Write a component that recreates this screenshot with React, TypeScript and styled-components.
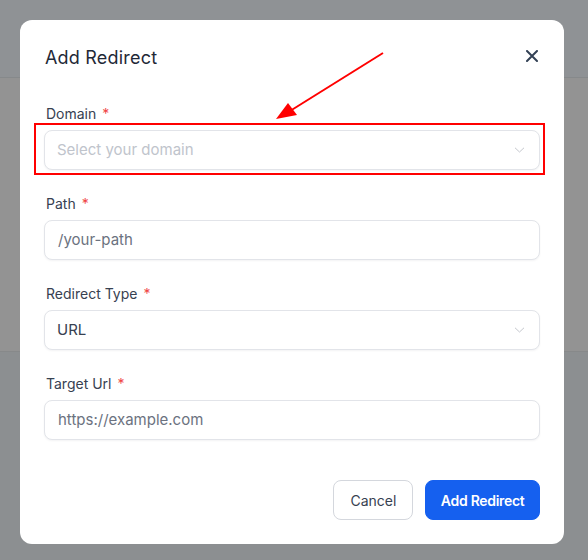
import React from 'react';
import styled, { createGlobalStyle } from 'styled-components';

const GlobalStyle = createGlobalStyle`
  * { box-sizing: border-box; }
  html, body {
    margin: 0;
    padding: 0;
    height: 100%;
  }
  body {
    font-family: Inter, "Noto Sans", "Liberation Sans", sans-serif;
    background: #8c8f91;
  }
`;

const Page = styled.div`
  position: relative;
  width: 588px;
  height: 560px;
  overflow: hidden;
  display: flex;
  flex-direction: column;
`;

const PageHeader = styled.div`
  height: 78px;
  background: #8f9295;
  border-bottom: 1px solid #86898b;
`;

const PagePanel = styled.div`
  height: 274px;
  background: #939393;
  border-bottom: 1px solid #87898a;
`;

const PageRest = styled.div`
  flex: 1;
  background: #8c8f91;
`;

const Backdrop = styled.div`
  position: absolute;
  inset: 0;
  padding: 20px 24px 16px 20px;
`;

const Modal = styled.div`
  position: relative;
  width: 544px;
  height: 524px;
  background: #ffffff;
  border-radius: 12px;
  padding: 24px;
  display: flex;
  flex-direction: column;
`;

const Header = styled.div`
  display: flex;
  align-items: center;
  justify-content: space-between;
  height: 26px;
  margin-bottom: 34px;
`;

const Title = styled.h2`
  margin: 2px 0 0 1px;
  font-size: 18px;
  line-height: 26px;
  font-weight: 400;
  letter-spacing: 0.2px;
  color: #1f2937;
`;

const CloseButton = styled.button`
  border: 0;
  background: transparent;
  padding: 0;
  width: 20px;
  height: 20px;
  display: flex;
  align-items: center;
  justify-content: center;
  margin-right: -2px;
  margin-top: -2px;
  color: #334155;
  cursor: pointer;
`;

const Form = styled.div`
  display: flex;
  flex-direction: column;
  gap: 24px;
`;

const Field = styled.div`
  position: relative;
  display: flex;
  flex-direction: column;
  gap: 6px;
`;

const Label = styled.label`
  font-size: 14px;
  line-height: 20px;
  color: #374151;
  padding-left: 2px;
`;

const Required = styled.span`
  color: #ef4444;
  margin-left: 6px;
`;

const Control = styled.div`
  height: 40px;
  border: 1px solid #e2e4e9;
  border-radius: 8px;
  background: #fff;
  box-shadow: 0 1px 2px rgba(16, 24, 40, 0.05);
  display: flex;
  align-items: center;
  justify-content: space-between;
  padding: 0 14px 1px 12px;
`;

const ControlText = styled.span<{ $tone: 'muted' | 'placeholder' | 'value' }>`
  font-size: 15px;
  color: ${(p) =>
    p.$tone === 'muted' ? '#c0c4cc' : p.$tone === 'placeholder' ? '#6b7280' : '#374151'};
  padding-left: ${(p) => (p.$tone === 'placeholder' ? '1px' : '0')};
`;

const Highlight = styled.div`
  position: absolute;
  left: -10px;
  right: -5px;
  top: 19px;
  bottom: -5px;
  border: 2px solid #ff0000;
  pointer-events: none;
`;

const Footer = styled.div`
  margin-top: auto;
  display: flex;
  justify-content: flex-end;
  gap: 12px;
`;

const Button = styled.button<{ $primary?: boolean }>`
  height: 40px;
  padding: 0 ${(p) => (p.$primary ? '14.5px' : '16px')};
  border-radius: 8px;
  font-family: inherit;
  font-size: 14px;
  letter-spacing: ${(p) => (p.$primary ? '-0.3px' : '0')};
  font-weight: ${(p) => (p.$primary ? 600 : 400)};
  border: 1px solid ${(p) => (p.$primary ? '#1560ef' : '#d4d7dd')};
  background: ${(p) => (p.$primary ? '#1560ef' : '#ffffff')};
  color: ${(p) => (p.$primary ? '#ffffff' : '#374151')};
  cursor: pointer;
`;

const ArrowLayer = styled.svg`
  position: absolute;
  left: 0;
  top: 0;
  pointer-events: none;
`;

const Chevron = () => (
  <svg width="11" height="6" viewBox="0 0 11 6" fill="none">
    <path d="M1 0.8 L5.5 5 L10 0.8" stroke="#c4c7cd" strokeWidth="1" />
  </svg>
);

export default function App() {
  return (
    <>
      <GlobalStyle />
      <Page>
        <PageHeader />
        <PagePanel />
        <PageRest />
        <Backdrop>
          <Modal>
            <Header>
              <Title>Add Redirect</Title>
              <CloseButton aria-label="Close">
                <svg width="12" height="12" viewBox="0 0 12 12">
                  <path d="M1 1 L11 11 M11 1 L1 11" stroke="currentColor" strokeWidth="2" strokeLinecap="round" />
                </svg>
              </CloseButton>
            </Header>

            <Form>
              <Field>
                <Label>
                  Domain<Required>*</Required>
                </Label>
                <Control>
                  <ControlText $tone="muted">Select your domain</ControlText>
                  <Chevron />
                </Control>
                <Highlight />
              </Field>

              <Field>
                <Label>
                  Path<Required>*</Required>
                </Label>
                <Control>
                  <ControlText $tone="placeholder">/your-path</ControlText>
                </Control>
              </Field>

              <Field>
                <Label>
                  Redirect Type<Required>*</Required>
                </Label>
                <Control>
                  <ControlText $tone="value">URL</ControlText>
                  <Chevron />
                </Control>
              </Field>

              <Field>
                <Label>
                  Target Url<Required>*</Required>
                </Label>
                <Control>
                  <ControlText $tone="placeholder">https://example.com</ControlText>
                </Control>
              </Field>
            </Form>

            <Footer>
              <Button>Cancel</Button>
              <Button $primary>Add Redirect</Button>
            </Footer>

            {/* annotation arrow, modal coordinates */}
            <ArrowLayer width="544" height="120" viewBox="0 0 544 120">
              <line x1="363" y1="33" x2="270" y2="91" stroke="#ff0000" strokeWidth="2" />
              <polygon points="256,99 268,83 277,95" fill="#ff0000" />
            </ArrowLayer>
          </Modal>
        </Backdrop>
      </Page>
    </>
  );
}
